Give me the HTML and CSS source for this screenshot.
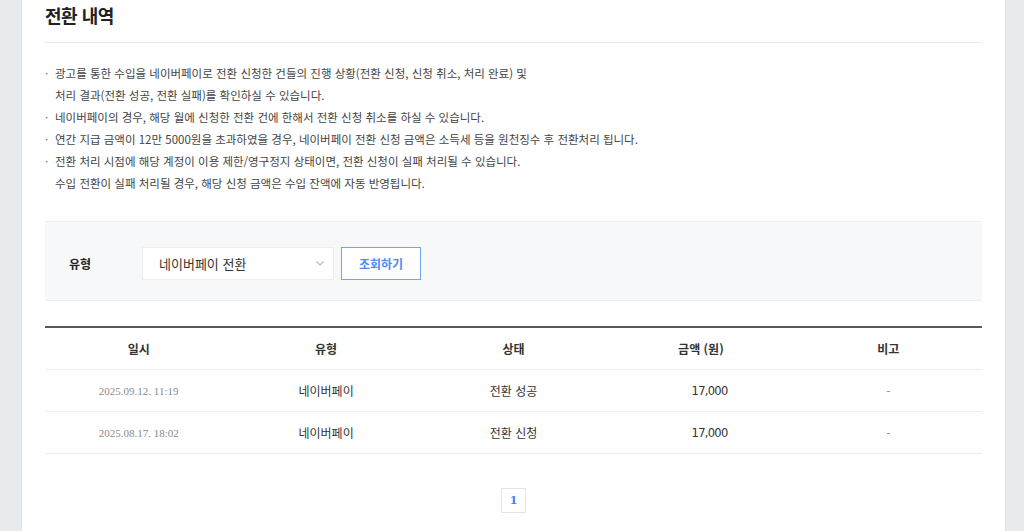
FILE: index.html
```html
<!DOCTYPE html>
<html lang="ko">
<head>
<meta charset="utf-8">
<link rel="stylesheet" href="styles.css">
</head>
<body>
<div class="page">
  <main class="panel">
    <h1 class="title">전환 내역</h1>
    <ul class="notes">
      <li>광고를 통한 수입을 네이버페이로 전환 신청한 건들의 진행 상황(전환 신청, 신청 취소, 처리 완료) 및<br>처리 결과(전환 성공, 전환 실패)를 확인하실 수 있습니다.</li>
      <li>네이버페이의 경우, 해당 월에 신청한 전환 건에 한해서 전환 신청 취소를 하실 수 있습니다.</li>
      <li>연간 지급 금액이 12만 5000원을 초과하였을 경우, 네이버페이 전환 신청 금액은 소득세 등을 원천징수 후 전환처리 됩니다.</li>
      <li>전환 처리 시점에 해당 계정이 이용 제한/영구정지 상태이면, 전환 신청이 실패 처리될 수 있습니다.<br>수입 전환이 실패 처리될 경우, 해당 신청 금액은 수입 잔액에 자동 반영됩니다.</li>
    </ul>
    <div class="filter">
      <span class="filter-label">유형</span>
      <div class="select">
        <span>네이버페이 전환</span>
        <svg class="caret" width="8" height="5" viewBox="0 0 8 5"><path d="M0.5 0.5 L4 4 L7.5 0.5" fill="none" stroke="#b8bcc2" stroke-width="1.2"/></svg>
      </div>
      <button class="btn">조회하기</button>
    </div>
    <div class="table">
      <div class="row head">
        <div class="cell">일시</div>
        <div class="cell">유형</div>
        <div class="cell">상태</div>
        <div class="cell">금액 (원)</div>
        <div class="cell">비고</div>
      </div>
      <div class="row">
        <div class="cell date">2025.09.12. 11:19</div>
        <div class="cell">네이버페이</div>
        <div class="cell">전환 성공</div>
        <div class="cell amount">17,000</div>
        <div class="cell dash">-</div>
      </div>
      <div class="row">
        <div class="cell date">2025.08.17. 18:02</div>
        <div class="cell">네이버페이</div>
        <div class="cell">전환 신청</div>
        <div class="cell amount">17,000</div>
        <div class="cell dash">-</div>
      </div>
    </div>
    <div class="pager"><span class="page-num">1</span></div>
  </main>
</div>
</body>
</html>
```

FILE: styles.css
```css
* { box-sizing: border-box; }
html, body { margin: 0; padding: 0; }
body {
  background: #e8ebee;
  font-family: "Noto Sans CJK KR", "Noto Sans", sans-serif;
  color: #333;
  height: 531px;
  overflow: hidden;
}
.page {
  display: flex;
  justify-content: flex-start;
  padding-left: 21px;
}
.panel {
  width: 985px;
  min-height: 531px;
  background: #fff;
  border-left: 1px solid #dfe2e6;
  border-right: 1px solid #dfe2e6;
  padding: 0 23px 0 23px;
}
.title {
  margin: 0;
  font-size: 18px;
  font-weight: 700;
  color: #222;
  height: 43px;
  line-height: 30px;
  border-bottom: 1px solid #ebebeb;
  letter-spacing: -0.5px;
}
.notes {
  list-style: none;
  margin: 19px 0 0;
  padding: 0;
  font-size: 11.5px;
  line-height: 22px;
  color: #444;
  letter-spacing: 0;
}
.notes li {
  position: relative;
  padding-left: 10px;
}
.notes li::before {
  content: "·";
  position: absolute;
  left: 0;
  top: 0;
  color: #777;
}
.filter {
  margin-top: 27px;
  height: 80px;
  background: #f7f8fa;
  border-top: 1px solid #eceef1;
  border-bottom: 1px solid #eceef1;
  display: flex;
  align-items: flex-start;
  padding: 25px 0 0 24px;
}
.filter-label {
  font-size: 12px;
  font-weight: 700;
  color: #222;
  width: 73px;
  line-height: 33px;
}
.select {
  width: 192px;
  height: 33px;
  background: #fff;
  border: 1px solid #eceef1;
  display: flex;
  align-items: center;
  justify-content: space-between;
  padding: 0 9px 0 16px;
  font-size: 13px;
  color: #333;
}
.caret { display: block; }
.btn {
  margin-left: 7px;
  width: 80px;
  height: 33px;
  background: #fff;
  border: 1px solid #6ea6f4;
  color: #4a8cef;
  font-family: inherit;
  font-size: 12px;
  font-weight: 600;
  padding: 0;
}
.table {
  margin-top: 25px;
  border-top: 2px solid #555a60;
}
.row {
  display: grid;
  grid-template-columns: repeat(5, 1fr);
  height: 42px;
  align-items: center;
  border-bottom: 1px solid #eeeff1;
  font-size: 12px;
  color: #333;
}
.row.head {
  height: 42px;
  font-weight: 700;
  color: #333;
}
.cell { text-align: center; }
.date {
  font-family: "Liberation Serif", "DejaVu Serif", serif;
  font-size: 11px;
  color: #8a8a8a;
}
.amount {
  text-align: right;
  padding-right: 67px;
  font-family: "DejaVu Sans", sans-serif;
  font-size: 11.5px;
  letter-spacing: -0.7px;
}
.dash { color: #888; }
.pager {
  display: flex;
  justify-content: center;
  margin-top: 34px;
}
.page-num {
  display: flex;
  align-items: center;
  justify-content: center;
  width: 25px;
  height: 25px;
  border: 1px solid #e2e4e7;
  color: #3d86ee;
  font-weight: 700;
  font-size: 11px;
  font-family: "DejaVu Serif", serif;
}
```
